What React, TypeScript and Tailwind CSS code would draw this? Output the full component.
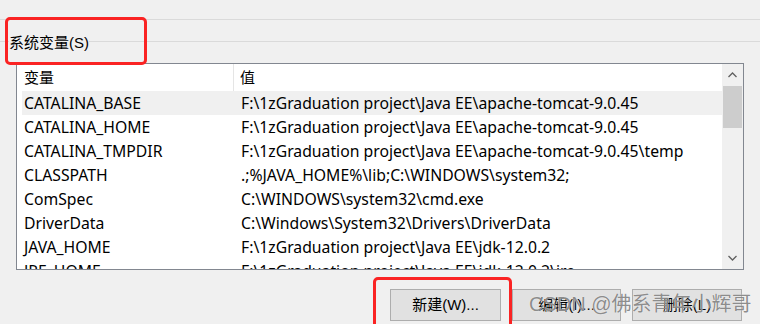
import React from 'react';

const rows: [string, string][] = [
  ['CATALINA_BASE', 'F:\\1zGraduation project\\Java EE\\apache-tomcat-9.0.45'],
  ['CATALINA_HOME', 'F:\\1zGraduation project\\Java EE\\apache-tomcat-9.0.45'],
  ['CATALINA_TMPDIR', 'F:\\1zGraduation project\\Java EE\\apache-tomcat-9.0.45\\temp'],
  ['CLASSPATH', '.;%JAVA_HOME%\\lib;C:\\WINDOWS\\system32;'],
  ['ComSpec', 'C:\\WINDOWS\\system32\\cmd.exe'],
  ['DriverData', 'C:\\Windows\\System32\\Drivers\\DriverData'],
  ['JAVA_HOME', 'F:\\1zGraduation project\\Java EE\\jdk-12.0.2'],
  ['JRE_HOME', 'F:\\1zGraduation project\\Java EE\\jdk-12.0.2\\jre'],
];

const Chevron: React.FC<{ up?: boolean }> = ({ up }) => (
  <svg width="9" height="6" viewBox="0 0 9 6" fill="none">
    <path
      d={up ? 'M0.5 5 L4.5 1 L8.5 5' : 'M0.5 1 L4.5 5 L8.5 1'}
      stroke="#606060"
      strokeWidth="1.3"
    />
  </svg>
);

export default function App() {
  return (
    <div className="relative w-[760px] h-[324px] overflow-hidden bg-[#f0f0f0] text-[15px] text-black font-['Liberation_Sans','Noto_Sans_CJK_SC',sans-serif]">
      {/* top separators */}
      <div className="h-[20px] border-b border-[#dadada]" />
      <div className="flex items-start h-[43px]">
        <div className="w-[9px] mt-[21px] h-px bg-[#dadada]" />
        <span className="mt-[14px] leading-[18px] whitespace-nowrap">系统变量(S)</span>
        <div className="flex-1 mt-[21px] h-px bg-[#dadada]" />
      </div>

      {/* list view */}
      <div className="ml-[16px] w-[728px] h-[207px] border border-[#828790] bg-white flex">
        <div className="flex-1 overflow-hidden">
          <div className="flex h-[27px] items-center leading-[18px]">
            <div className="w-[217px] h-full pl-[7px] flex items-center border-r border-[#e5e5e5]">变量</div>
            <div className="pl-[6px]">值</div>
          </div>
          {rows.map(([name, value], i) => (
            <div
              key={name}
              className={
                "ml-[5px] flex h-[24px] items-center whitespace-nowrap leading-[18px] text-[15.75px] font-['Noto_Sans','Noto_Sans_CJK_SC',sans-serif] " +
                (i === 0 ? 'bg-[#f0f0f0]' : '')
              }
            >
              <div className="w-[217px] pl-[2px]">{name}</div>
              <div className="pl-[2px]">{value}</div>
            </div>
          ))}
        </div>
        <div className="w-[21px] bg-[#f0f0f0] flex flex-col">
          <div className="h-[22px] flex items-center justify-center">
            <Chevron up />
          </div>
          <div className="mx-px h-[42px] bg-[#cdcdcd]" />
          <div className="flex-1" />
          <div className="h-[22px] flex items-center justify-center">
            <Chevron />
          </div>
        </div>
      </div>

      {/* buttons */}
      <div className="flex mt-[19px] pl-[390px] gap-[11px]">
        <button className="w-[111px] h-[32px] bg-[#e1e1e1] border border-[#adadad] leading-[18px]">新建(W)...</button>
        <button className="w-[109px] h-[32px] bg-[#e1e1e1] border border-[#adadad] leading-[18px]">编辑(I)...</button>
        <button className="w-[110px] h-[32px] bg-[#e1e1e1] border border-[#adadad] leading-[18px]">删除(L)</button>
      </div>

      {/* watermark */}
      <div className="absolute left-[529px] top-[292px] text-[20px] leading-[24px] whitespace-nowrap text-[#6e6e6e]/80 [text-shadow:0_0_1px_#ffffff] font-['Liberation_Sans','Noto_Sans_CJK_SC',sans-serif]">
        CSDN @佛系青年小辉哥
      </div>

      {/* annotation boxes */}
      <div className="absolute left-[5px] top-[17px] w-[142px] h-[48px] border-[3px] border-[#fa2323] rounded-[5px]" />
      <div className="absolute left-[373px] top-[277px] w-[139px] h-[60px] border-[3px] border-[#fa2323] rounded-[5px]" />
    </div>
  );
}
